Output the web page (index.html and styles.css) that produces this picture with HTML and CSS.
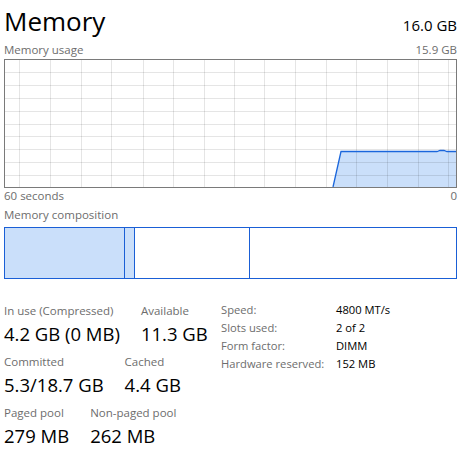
FILE: index.html
```html
<!DOCTYPE html>
<html>
<head>
<meta charset="utf-8">
<link rel="stylesheet" href="styles.css">
</head>
<body>
<div class="page">
  <div class="header">
    <div class="title">Memory</div>
    <div class="total">16.0 GB</div>
  </div>
  <div class="caption-row top-cap">
    <span>Memory usage</span>
    <span>15.9 GB</span>
  </div>
  <svg class="graph" width="453" height="129" viewBox="0 0 453 129">
    <polygon class="fill" points="329,128 337,92.5 433,92.5 436,91.5 440,91.5 443,92.5 452,92.5 452,128"/>
    <g class="grid">
      <line x1="15.5" y1="0" x2="15.5" y2="129"/>
      <line x1="46.5" y1="0" x2="46.5" y2="129"/>
      <line x1="77.5" y1="0" x2="77.5" y2="129"/>
      <line x1="107.5" y1="0" x2="107.5" y2="129"/>
      <line x1="139.5" y1="0" x2="139.5" y2="129"/>
      <line x1="169.5" y1="0" x2="169.5" y2="129"/>
      <line x1="200.5" y1="0" x2="200.5" y2="129"/>
      <line x1="230.5" y1="0" x2="230.5" y2="129"/>
      <line x1="260.5" y1="0" x2="260.5" y2="129"/>
      <line x1="291.5" y1="0" x2="291.5" y2="129"/>
      <line x1="322.5" y1="0" x2="322.5" y2="129"/>
      <line x1="352.5" y1="0" x2="352.5" y2="129"/>
      <line x1="383.5" y1="0" x2="383.5" y2="129"/>
      <line x1="414.5" y1="0" x2="414.5" y2="129"/>
      <line x1="444.5" y1="0" x2="444.5" y2="129"/>
      <line x1="0" y1="13.5" x2="453" y2="13.5"/>
      <line x1="0" y1="26.5" x2="453" y2="26.5"/>
      <line x1="0" y1="39.5" x2="453" y2="39.5"/>
      <line x1="0" y1="52.5" x2="453" y2="52.5"/>
      <line x1="0" y1="65.5" x2="453" y2="65.5"/>
      <line x1="0" y1="77.5" x2="453" y2="77.5"/>
      <line x1="0" y1="90.5" x2="453" y2="90.5"/>
      <line x1="0" y1="103.5" x2="453" y2="103.5"/>
      <line x1="0" y1="116.5" x2="453" y2="116.5"/>
    </g>
    <polyline class="line" points="329,128 337,92.5 433,92.5 436,91.5 440,91.5 443,92.5 452,92.5"/>
    <rect class="frame" x="0.5" y="0.5" width="452" height="128"/>
  </svg>
  <div class="caption-row">
    <span>60 seconds</span>
    <span>0</span>
  </div>
  <div class="caption-row comp-cap">
    <span>Memory composition</span>
  </div>
  <div class="composition">
    <div class="seg seg-inuse"></div>
    <div class="seg seg-modified"></div>
    <div class="seg seg-standby"></div>
    <div class="seg seg-free"></div>
  </div>
  <div class="stats">
    <div class="stats-left">
      <div class="stat-row">
        <div class="stat"><div class="label">In use (Compressed)</div><div class="value">4.2 GB (0 MB)</div></div>
        <div class="stat"><div class="label">Available</div><div class="value">11.3 GB</div></div>
      </div>
      <div class="stat-row">
        <div class="stat"><div class="label">Committed</div><div class="value">5.3/18.7 GB</div></div>
        <div class="stat"><div class="label">Cached</div><div class="value">4.4 GB</div></div>
      </div>
      <div class="stat-row">
        <div class="stat"><div class="label">Paged pool</div><div class="value">279 MB</div></div>
        <div class="stat"><div class="label">Non-paged pool</div><div class="value">262 MB</div></div>
      </div>
    </div>
    <div class="stats-right">
      <div class="kv"><span class="k">Speed:</span><span class="v">4800 MT/s</span></div>
      <div class="kv"><span class="k">Slots used:</span><span class="v">2 of 2</span></div>
      <div class="kv"><span class="k">Form factor:</span><span class="v">DIMM</span></div>
      <div class="kv"><span class="k">Hardware reserved:</span><span class="v">152 MB</span></div>
    </div>
  </div>
</div>
</body>
</html>
```
FILE: styles.css
```css
html, body {
  margin: 0;
  padding: 0;
  background: #ffffff;
}
body {
  font-family: "Open Sans", "Noto Sans", sans-serif;
  color: #000;
}
.page {
  width: 453px;
  padding: 0 8px 0 4px;
}
.header {
  display: flex;
  justify-content: space-between;
  align-items: baseline;
  height: 42px;
}
.title {
  font-size: 26px;
  line-height: 42px;
  font-weight: 400;
  letter-spacing: 0;
}
.total {
  font-size: 15px;
  line-height: 42px;
}
.caption-row {
  display: flex;
  justify-content: space-between;
  font-size: 11.5px;
  line-height: 16px;
  color: #6d6d6d;
  height: 16px;
}
.top-cap {
  line-height: 15px;
  height: 15px;
  margin-bottom: 2px;
}
.graph {
  display: block;
}
.graph .fill {
  fill: #cadffa;
}
.graph .grid line {
  stroke: rgba(0, 0, 0, 0.1);
  stroke-width: 1;
}
.graph .line {
  fill: none;
  stroke: #1a66dc;
  stroke-width: 1.3;
}
.graph .frame {
  fill: none;
  stroke: #7a7a7a;
  stroke-width: 1;
}
.comp-cap {
  margin-top: 3px;
}
.composition {
  display: flex;
  height: 50px;
  border: 1px solid #1a5fd6;
  margin-top: 4px;
}
.seg {
  height: 100%;
}
.seg-inuse {
  width: 119px;
  background: #cadffa;
  border-right: 1px solid #1a5fd6;
}
.seg-modified {
  width: 9px;
  background: #cadffa;
  border-right: 1px solid #1a5fd6;
}
.seg-standby {
  width: 114px;
  border-right: 1px solid #1a5fd6;
}
.seg-free {
  flex: 1;
}
.stats {
  display: flex;
  margin-top: 22px;
}
.stats-left {
  width: 217px;
  padding-top: 2px;
  display: flex;
  flex-direction: column;
  gap: 6px;
}
.stat-row {
  display: flex;
  gap: 21px;
}
.label {
  font-size: 11.5px;
  line-height: 16px;
  color: #6d6d6d;
}
.value {
  font-size: 18.5px;
  line-height: 28px;
  margin-top: 1px;
  color: #000;
}
.stats-right {
  display: flex;
  flex-direction: column;
}
.kv {
  display: flex;
  font-size: 11.2px;
  line-height: 18px;
}
.k {
  width: 115px;
  color: #6d6d6d;
}
.v {
  color: #000;
}
```
